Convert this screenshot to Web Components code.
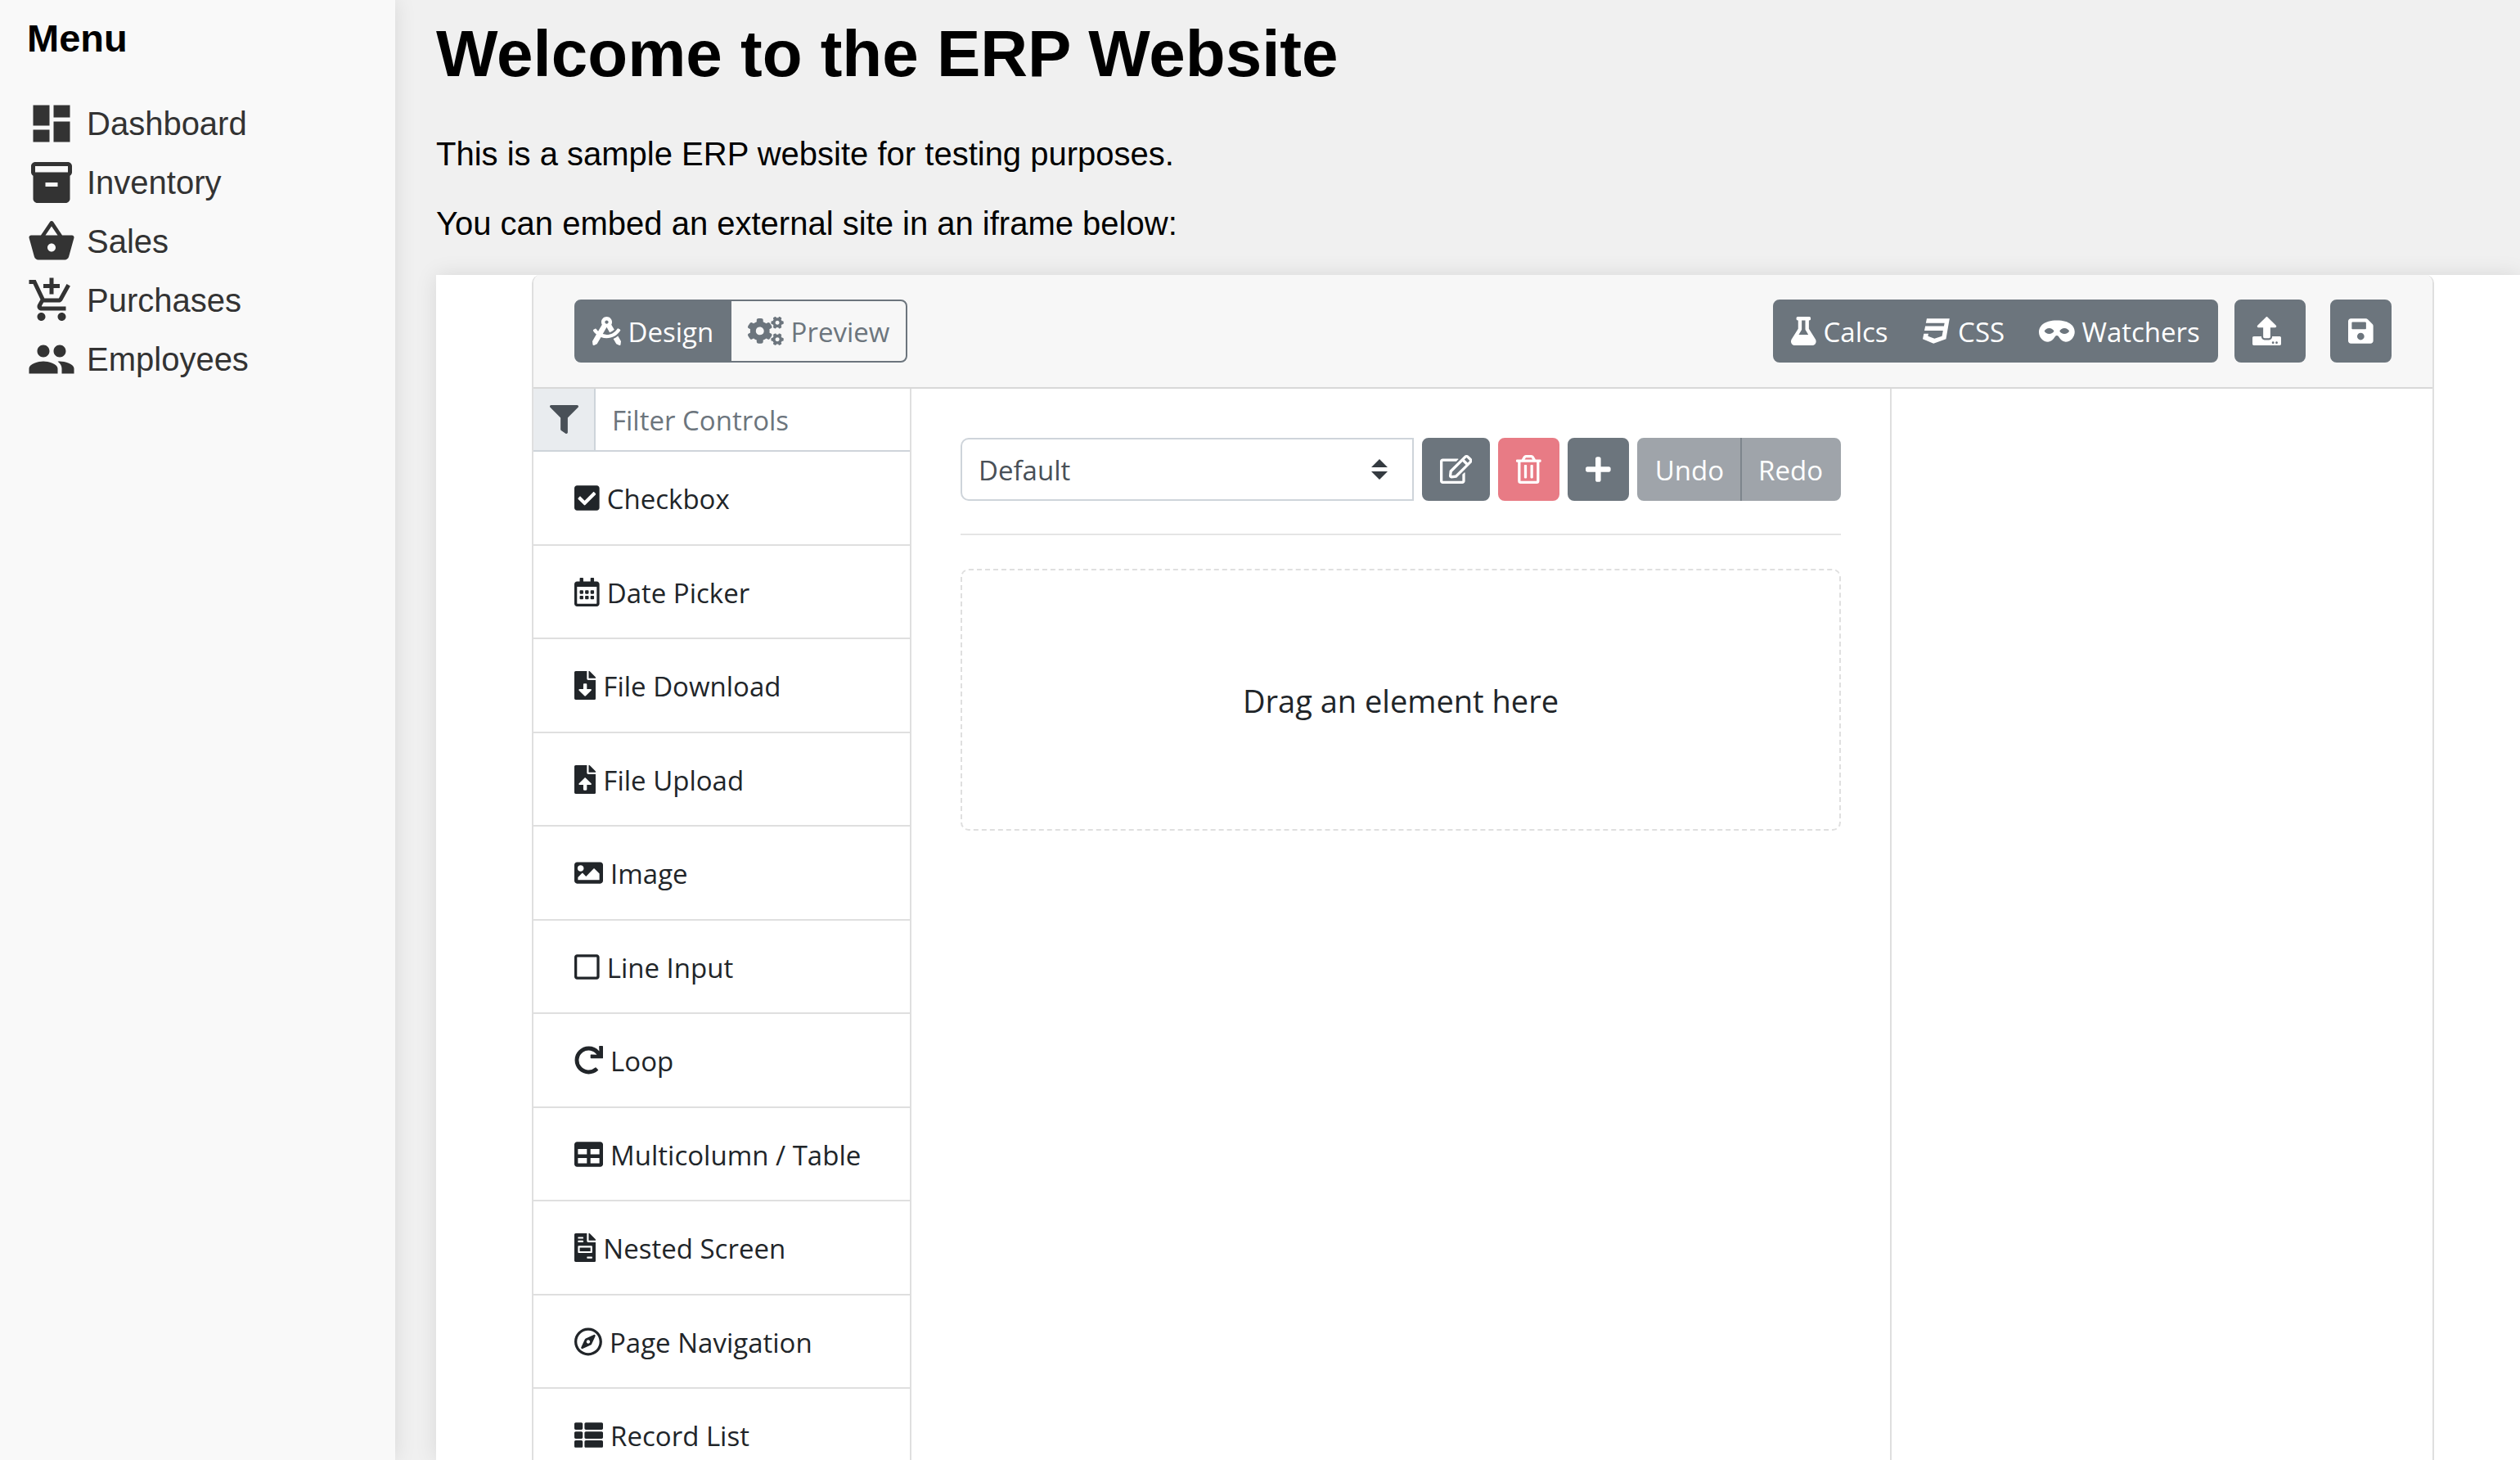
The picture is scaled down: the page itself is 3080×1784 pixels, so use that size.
<!DOCTYPE html>
<html lang="en">
<head>
<meta charset="utf-8">
<title>ERP Website</title>
<style>
  html, body { height: 100%; margin: 0; }
  body { font-family: "Liberation Sans", Arial, sans-serif; font-size: 40px; background: #f0f0f0; color: #000; overflow: hidden; }
</style>
</head>
<body>
<erp-app>
  <erp-sidebar slot="sidebar" heading="Menu">
    <erp-nav-item icon="dashboard">Dashboard</erp-nav-item>
    <erp-nav-item icon="inventory">Inventory</erp-nav-item>
    <erp-nav-item icon="basket">Sales</erp-nav-item>
    <erp-nav-item icon="cart">Purchases</erp-nav-item>
    <erp-nav-item icon="people">Employees</erp-nav-item>
  </erp-sidebar>
  <erp-intro>
    <span slot="title">Welcome to the ERP Website</span>
    <span slot="lead">This is a sample ERP website for testing purposes.</span>
    <span slot="note">You can embed an external site in an iframe below:</span>
  </erp-intro>
  <screen-builder>
    <builder-toolbar slot="toolbar"></builder-toolbar>
    <control-palette slot="controls">
      <palette-item icon="check">Checkbox</palette-item>
      <palette-item icon="calendar">Date Picker</palette-item>
      <palette-item icon="download">File Download</palette-item>
      <palette-item icon="fileup">File Upload</palette-item>
      <palette-item icon="image">Image</palette-item>
      <palette-item icon="square">Line Input</palette-item>
      <palette-item icon="redo">Loop</palette-item>
      <palette-item icon="table">Multicolumn / Table</palette-item>
      <palette-item icon="invoice">Nested Screen</palette-item>
      <palette-item icon="compass">Page Navigation</palette-item>
      <palette-item icon="list">Record List</palette-item>
    </control-palette>
    <builder-canvas slot="canvas">Drag an element here</builder-canvas>
  </screen-builder>
</erp-app>

<script>
// name: [viewBox width, viewBox height, path]
const ICONS = {
  dashboard: [24, 24, "M3 13h8V3H3v10zm0 8h8v-6H3v6zm10 0h8V11h-8v10zm0-18v6h8V3h-8z"],
  inventory: [24, 24, "M20 2H4c-1 0-2 .9-2 2v3.01c0 .72.43 1.34 1 1.69V20c0 1.1 1.1 2 2 2h14c.9 0 2-.9 2-2V8.7c.57-.35 1-.97 1-1.69V4c0-1.1-1-2-2-2zm-5 12H9v-2h6v2zm5-7H4V4l16-.02V7z"],
  basket: [24, 24, "M17.21 9l-4.38-6.56c-.19-.28-.51-.42-.83-.42-.32 0-.64.14-.83.43L6.79 9H2c-.55 0-1 .45-1 1 0 .09.01.18.04.27l2.54 9.27c.23.84 1 1.46 1.92 1.46h13c.92 0 1.69-.62 1.93-1.46l2.54-9.27L23 10c0-.55-.45-1-1-1h-4.79zM9 9l3-4.4L15 9H9zm3 8c-1.1 0-2-.9-2-2s.9-2 2-2 2 .9 2 2-.9 2-2 2z"],
  cart: [24, 24, "M11 9h2V6h3V4h-3V1h-2v3H8v2h3v3zm-4 9c-1.1 0-1.99.9-1.99 2S5.9 22 7 22s2-.9 2-2-.9-2-2-2zm10 0c-1.1 0-1.99.9-1.99 2s.89 2 1.99 2 2-.9 2-2-.9-2-2-2zm-9.83-3.25l.03-.12.9-1.63h7.45c.75 0 1.41-.41 1.75-1.03l3.86-7.01L19.42 4h-.01l-1.1 2-2.76 5H8.53l-.13-.27L6.16 6l-.95-2-.94-2H1v2h2l3.6 7.59-1.35 2.45c-.16.28-.25.61-.25.96 0 1.1.9 2 2 2h12v-2H7.42c-.13 0-.25-.11-.25-.25z"],
  people: [24, 24, "M16 11c1.66 0 2.99-1.34 2.99-3S17.66 5 16 5c-1.66 0-3 1.34-3 3s1.34 3 3 3zm-8 0c1.66 0 2.99-1.34 2.99-3S9.66 5 8 5C6.34 5 5 6.34 5 8s1.34 3 3 3zm0 2c-2.33 0-7 1.17-7 3.5V19h14v-2.5c0-2.33-4.67-3.5-7-3.5zm8 0c-.29 0-.62.02-.97.05 1.16.84 1.97 1.97 1.97 3.45V19h6v-2.5c0-2.33-4.67-3.5-7-3.5z"],
  drafting: [512, 512, "M457.01 344.42c-25.05 20.33-52.63 37.18-82.54 49.05l54.38 94.19 53.95 23.04c9.81 4.19 20.89-2.21 22.17-12.8l7.02-58.25-54.98-95.23zm42.49-94.56c4.86-7.67 1.89-17.99-6.05-22.39l-28.07-15.57c-7.48-4.15-16.61-1.46-21.26 5.72C403.01 281.15 332.25 320 256 320c-23.93 0-47.23-4.25-69.41-11.53l67.36-116.68c.7.02 1.34.21 2.04.21s1.35-.19 2.04-.21l51.09 88.5c31.23-8.96 59.56-25.75 82.61-48.92l-51.79-89.71C347.39 128.03 352 112.63 352 96c0-53.02-42.98-96-96-96s-96 42.98-96 96c0 16.63 4.61 32.03 12.05 45.66l-68.3 118.31c-12.55-11.61-23.96-24.59-33.68-39-4.79-7.1-13.97-9.62-21.38-5.33l-27.75 16.07c-7.85 4.54-10.63 14.9-5.64 22.47 15.57 23.64 34.69 44.21 55.98 62.02L0 439.66l7.02 58.25c1.28 10.59 12.36 16.99 22.17 12.8l53.95-23.04 70.8-122.63C186.13 377.28 220.62 384 256 384c99.05 0 190.88-51.01 243.5-134.14zM256 64c17.67 0 32 14.33 32 32s-14.33 32-32 32-32-14.33-32-32 14.33-32 32-32z"],
  cogs: [640, 512, "M512.1 191l-8.2 14.3c-3 5.3-9.4 7.5-15.1 5.4-11.8-4.4-22.6-10.7-32.1-18.6-4.6-3.8-5.8-10.5-2.8-15.7l8.2-14.3c-6.9-8-12.3-17.3-15.9-27.4h-16.5c-6 0-11.2-4.3-12.2-10.3-2-12-2.1-24.6 0-37.1 1-6 6.2-10.4 12.2-10.4h16.5c3.6-10.1 9-19.4 15.9-27.4l-8.2-14.3c-3-5.2-1.9-11.9 2.8-15.7 9.5-7.9 20.4-14.2 32.1-18.6 5.7-2.1 12.1.1 15.1 5.4l8.2 14.3c10.5-1.9 21.2-1.9 31.7 0L552 6.3c3-5.3 9.4-7.5 15.1-5.4 11.8 4.4 22.6 10.7 32.1 18.6 4.6 3.8 5.8 10.5 2.8 15.7l-8.2 14.3c6.9 8 12.3 17.3 15.9 27.4h16.5c6 0 11.2 4.3 12.2 10.3 2 12 2.1 24.6 0 37.1-1 6-6.2 10.4-12.2 10.4h-16.5c-3.6 10.1-9 19.4-15.9 27.4l8.2 14.3c3 5.2 1.9 11.9-2.8 15.7-9.5 7.9-20.4 14.2-32.1 18.6-5.7 2.1-12.1-.1-15.1-5.4l-8.2-14.3c-10.4 1.9-21.2 1.9-31.7 0zm-10.5-58.8c38.5 29.6 82.4-14.3 52.8-52.8-38.5-29.7-82.4 14.3-52.8 52.8zM386.3 286.1l33.7 16.8c10.1 5.8 14.5 18.1 10.5 29.1-8.9 24.2-26.4 46.4-42.6 65.8-7.4 8.9-20.2 11.1-30.3 5.3l-29.1-16.8c-16 13.7-34.6 24.6-54.9 31.7v33.6c0 11.6-8.3 21.6-19.7 23.6-24.6 4.2-50.4 4.4-75.9 0-11.5-2-20-11.9-20-23.6V418c-20.3-7.2-38.9-18-54.9-31.7L74 403c-10 5.8-22.9 3.6-30.3-5.3-16.2-19.4-33.3-41.6-42.2-65.7-4-10.9.4-23.2 10.5-29.1l33.3-16.8c-3.9-20.9-3.9-42.4 0-63.4L12 205.8c-10.1-5.8-14.6-18.1-10.5-29 8.9-24.2 26-46.4 42.2-65.8 7.4-8.9 20.2-11.1 30.3-5.3l29.1 16.8c16-13.7 34.6-24.6 54.9-31.7V57.1c0-11.5 8.2-21.5 19.6-23.5 24.6-4.2 50.5-4.4 76-.1 11.5 2 20 11.9 20 23.6v33.6c20.3 7.2 38.9 18 54.9 31.7l29.1-16.8c10-5.8 22.9-3.6 30.3 5.3 16.2 19.4 33.2 41.6 42.1 65.8 4 10.9.1 23.2-10 29.1l-33.7 16.8c3.9 21 3.9 42.5 0 63.5zm-117.6 21.1c59.2-77-28.7-164.9-105.7-105.7-59.2 77 28.7 164.9 105.7 105.7zm243.4 182.7l-8.2 14.3c-3 5.3-9.4 7.5-15.1 5.4-11.8-4.4-22.6-10.7-32.1-18.6-4.6-3.8-5.8-10.5-2.8-15.7l8.2-14.3c-6.9-8-12.3-17.3-15.9-27.4h-16.5c-6 0-11.2-4.3-12.2-10.3-2-12-2.1-24.6 0-37.1 1-6 6.2-10.4 12.2-10.4h16.5c3.6-10.1 9-19.4 15.9-27.4l-8.2-14.3c-3-5.2-1.9-11.9 2.8-15.7 9.5-7.9 20.4-14.2 32.1-18.6 5.7-2.1 12.1.1 15.1 5.4l8.2 14.3c10.5-1.9 21.2-1.9 31.7 0l8.2-14.3c3-5.3 9.4-7.5 15.1-5.4 11.8 4.4 22.6 10.7 32.1 18.6 4.6 3.8 5.8 10.5 2.8 15.7l-8.2 14.3c6.9 8 12.3 17.3 15.9 27.4h16.5c6 0 11.2 4.3 12.2 10.3 2 12 2.1 24.6 0 37.1-1 6-6.2 10.4-12.2 10.4h-16.5c-3.6 10.1-9 19.4-15.9 27.4l8.2 14.3c3 5.2 1.9 11.9-2.8 15.7-9.5 7.9-20.4 14.2-32.1 18.6-5.7 2.1-12.1-.1-15.1-5.4l-8.2-14.3c-10.4 1.9-21.2 1.9-31.7 0zM501.6 431c38.5 29.6 82.4-14.3 52.8-52.8-38.5-29.6-82.4 14.3-52.8 52.8z"],
  flask: [448, 512, "M437.2 403.5L320 215V64h8c13.3 0 24-10.7 24-24V24c0-13.3-10.7-24-24-24H120c-13.3 0-24 10.7-24 24v16c0 13.3 10.7 24 24 24h8v151L10.8 403.5C-18.5 450.6 15.3 512 70.9 512h306.2c55.7 0 89.4-61.5 60.1-108.5zM137.9 320l48.2-77.6c3.7-5.2 5.8-11.6 5.8-18.4V64h64v160c0 6.9 2.2 13.2 5.8 18.4l48.2 77.6h-172z"],
  css: [512, 512, "M480 32l-64 368-223.3 80L0 400l19.6-94.8h82l-8 40.6L210 390.2l134.1-44.4 18.8-97.1H29.5l16-82h333.7l10.5-52.7H56.3l16.3-82H480z"],
  mask: [640, 512, "M320.67 64c-442.6 0-357.57 384-158.46 384 39.9 0 77.47-20.69 101.42-55.86l25.73-37.79c15.66-22.99 46.97-22.99 62.63 0l25.73 37.79C401.66 427.31 439.23 448 479.13 448c189.86 0 290.63-384-158.46-384zM184 308.36c-41.06 0-67.76-25.66-80.08-41.05-5.23-6.53-5.23-16.09 0-22.63 12.32-15.4 39.01-41.05 80.08-41.05s67.76 25.66 80.08 41.05c5.23 6.53 5.23 16.09 0 22.63-12.32 15.4-39.02 41.05-80.08 41.05zm272 0c-41.06 0-67.76-25.66-80.08-41.05-5.23-6.53-5.23-16.09 0-22.63 12.32-15.4 39.01-41.05 80.08-41.05s67.76 25.66 80.08 41.05c5.23 6.53 5.23 16.09 0 22.63-12.32 15.4-39.02 41.05-80.08 41.05z"],
  upload: [512, 512, "M296 384h-80c-13.3 0-24-10.7-24-24V192h-87.7c-17.8 0-26.7-21.5-14.1-34.1L242.3 5.7c7.5-7.5 19.8-7.5 27.3 0l152.2 152.2c12.6 12.6 3.7 34.1-14.1 34.1H320v168c0 13.3-10.7 24-24 24zm216-8v112c0 13.3-10.7 24-24 24H24c-13.3 0-24-10.7-24-24V376c0-13.3 10.7-24 24-24h136v8c0 30.9 25.1 56 56 56h80c30.9 0 56-25.1 56-56v-8h136c13.3 0 24 10.7 24 24zm-124 88c0-11-9-20-20-20s-20 9-20 20 9 20 20 20 20-9 20-20zm64 0c0-11-9-20-20-20s-20 9-20 20 9 20 20 20 20-9 20-20z"],
  save: [448, 512, "M433.941 129.941l-83.882-83.882A48 48 0 0 0 316.118 32H48C21.49 32 0 53.49 0 80v352c0 26.51 21.49 48 48 48h352c26.51 0 48-21.49 48-48V163.882a48 48 0 0 0-14.059-33.941zM224 416c-35.346 0-64-28.654-64-64 0-35.346 28.654-64 64-64s64 28.654 64 64c0 35.346-28.654 64-64 64zm96-304.52V212c0 6.627-5.373 12-12 12H76c-6.627 0-12-5.373-12-12V108c0-6.627 5.373-12 12-12h228.52c3.183 0 6.235 1.264 8.485 3.515l3.48 3.48A11.996 11.996 0 0 1 320 111.48z"],
  filter: [512, 512, "M487.976 0H24.028C2.71 0-8.047 25.866 7.058 40.971L192 225.941V432c0 7.831 3.821 15.17 10.237 19.662l80 55.98C298.02 518.69 320 507.493 320 487.98V225.941l184.947-184.97C520.021 25.896 509.338 0 487.976 0z"],
  check: [448, 512, "M400 480H48c-26.51 0-48-21.49-48-48V80c0-26.51 21.49-48 48-48h352c26.51 0 48 21.49 48 48v352c0 26.51-21.49 48-48 48zm-204.686-98.059l184-184c6.248-6.248 6.248-16.379 0-22.627l-22.627-22.627c-6.248-6.248-16.379-6.249-22.628 0L184 302.745l-70.059-70.059c-6.248-6.248-16.379-6.248-22.628 0l-22.627 22.627c-6.248 6.248-6.248 16.379 0 22.627l104 104c6.249 6.25 16.379 6.25 22.628.001z"],
  calendar: [448, 512, "M148 288h-40c-6.6 0-12-5.4-12-12v-40c0-6.6 5.4-12 12-12h40c6.6 0 12 5.4 12 12v40c0 6.6-5.4 12-12 12zm108-12v-40c0-6.6-5.4-12-12-12h-40c-6.6 0-12 5.4-12 12v40c0 6.6 5.4 12 12 12h40c6.6 0 12-5.4 12-12zm96 0v-40c0-6.6-5.4-12-12-12h-40c-6.6 0-12 5.4-12 12v40c0 6.6 5.4 12 12 12h40c6.6 0 12-5.4 12-12zm-96 96v-40c0-6.6-5.4-12-12-12h-40c-6.6 0-12 5.4-12 12v40c0 6.6 5.4 12 12 12h40c6.6 0 12-5.4 12-12zm-96 0v-40c0-6.6-5.4-12-12-12h-40c-6.6 0-12 5.4-12 12v40c0 6.6 5.4 12 12 12h40c6.6 0 12-5.4 12-12zm192 0v-40c0-6.6-5.4-12-12-12h-40c-6.6 0-12 5.4-12 12v40c0 6.6 5.4 12 12 12h40c6.6 0 12-5.4 12-12zm96-260v352c0 26.5-21.5 48-48 48H48c-26.5 0-48-21.5-48-48V112c0-26.5 21.5-48 48-48h48V12c0-6.6 5.4-12 12-12h40c6.6 0 12 5.4 12 12v52h128V12c0-6.6 5.4-12 12-12h40c6.6 0 12 5.4 12 12v52h48c26.5 0 48 21.5 48 48zm-48 346V160H48v298c0 3.3 2.7 6 6 6h340c3.3 0 6-2.7 6-6z"],
  download: [384, 512, "M224 136V0H24C10.7 0 0 10.7 0 24v464c0 13.3 10.7 24 24 24h336c13.3 0 24-10.7 24-24V160H248c-13.2 0-24-10.8-24-24zm76.45 211.36l-96.42 95.7c-6.65 6.61-17.39 6.61-24.04 0l-96.42-95.7C73.42 337.29 80.54 320 94.82 320H160v-80c0-8.84 7.16-16 16-16h32c8.84 0 16 7.16 16 16v80h65.18c14.28 0 21.4 17.29 11.27 27.36zM377 105L279.1 7c-4.5-4.5-10.6-7-17-7H256v128h128v-6.1c0-6.3-2.5-12.4-7-16.9z"],
  fileup: [384, 512, "M224 136V0H24C10.7 0 0 10.7 0 24v464c0 13.3 10.7 24 24 24h336c13.3 0 24-10.7 24-24V160H248c-13.2 0-24-10.8-24-24zm65.18 216.01H224v80c0 8.84-7.16 16-16 16h-32c-8.84 0-16-7.16-16-16v-80H94.82c-14.28 0-21.41-17.29-11.27-27.36l96.42-95.7c6.65-6.61 17.39-6.61 24.04 0l96.42 95.7c10.15 10.07 3.03 27.36-11.25 27.36zM377 105L279.1 7c-4.5-4.5-10.6-7-17-7H256v128h128v-6.1c0-6.3-2.5-12.4-7-16.9z"],
  image: [512, 512, "M464 448H48c-26.51 0-48-21.49-48-48V112c0-26.51 21.49-48 48-48h416c26.51 0 48 21.49 48 48v288c0 26.51-21.49 48-48 48zM112 120c-30.928 0-56 25.072-56 56s25.072 56 56 56 56-25.072 56-56-25.072-56-56-56zM64 384h384V272l-87.515-87.515c-4.686-4.686-12.284-4.686-16.971 0L208 320l-55.515-55.515c-4.686-4.686-12.284-4.686-16.971 0L64 336v48z"],
  square: [448, 512, "M400 32H48C21.5 32 0 53.5 0 80v352c0 26.5 21.5 48 48 48h352c26.5 0 48-21.5 48-48V80c0-26.5-21.5-48-48-48zm-6 400H54c-3.3 0-6-2.7-6-6V86c0-3.3 2.7-6 6-6h340c3.3 0 6 2.7 6 6v340c0 3.3-2.7 6-6 6z"],
  redo: [512, 512, "M500.33 0h-47.41a12 12 0 0 0-12 12.57l4 82.76A247.42 247.42 0 0 0 256 8C119.34 8 7.9 119.53 8 256.19 8.1 393.07 119.1 504 256 504a247.1 247.1 0 0 0 166.18-63.91 12 12 0 0 0 .48-17.43l-34-34a12 12 0 0 0-16.38-.55A176 176 0 1 1 402.1 157.8l-101.53-4.87a12 12 0 0 0-12.57 12v47.41a12 12 0 0 0 12 12h200.33a12 12 0 0 0 12-12V12a12 12 0 0 0-12-12z"],
  table: [512, 512, "M464 32H48C21.49 32 0 53.49 0 80v352c0 26.51 21.49 48 48 48h416c26.51 0 48-21.49 48-48V80c0-26.51-21.49-48-48-48zM224 416H64v-96h160v96zm0-160H64v-96h160v96zm224 160H288v-96h160v96zm0-160H288v-96h160v96z"],
  invoice: [384, 512, "M288 256H96v64h192v-64zm89-151L279.1 7c-4.5-4.5-10.6-7-17-7H256v128h128v-6.1c0-6.3-2.5-12.4-7-16.9zm-153 31V0H24C10.7 0 0 10.7 0 24v464c0 13.3 10.7 24 24 24h336c13.3 0 24-10.7 24-24V160H248c-13.2 0-24-10.8-24-24zM64 72c0-4.42 3.58-8 8-8h80c4.42 0 8 3.58 8 8v16c0 4.42-3.58 8-8 8H72c-4.42 0-8-3.58-8-8V72zm0 64c0-4.42 3.58-8 8-8h80c4.42 0 8 3.58 8 8v16c0 4.42-3.58 8-8 8H72c-4.42 0-8-3.58-8-8v-16zm256 304c0 4.42-3.58 8-8 8h-80c-4.42 0-8-3.58-8-8v-16c0-4.42 3.58-8 8-8h80c4.42 0 8 3.58 8 8v16zm0-200v96c0 8.84-7.16 16-16 16H80c-8.84 0-16-7.16-16-16v-96c0-8.84 7.16-16 16-16h224c8.84 0 16 7.16 16 16z"],
  compass: [496, 512, "M347.94 129.86L203.6 195.83a31.938 31.938 0 0 0-15.77 15.77l-65.97 144.34c-7.61 16.65 9.54 33.81 26.2 26.2l144.34-65.97a31.938 31.938 0 0 0 15.77-15.77l65.97-144.34c7.61-16.66-9.54-33.81-26.2-26.2zm-77.36 148.72c-12.47 12.47-32.69 12.47-45.16 0-12.47-12.47-12.47-32.69 0-45.16 12.47-12.47 32.69-12.47 45.16 0 12.47 12.47 12.47 32.69 0 45.16zM248 8C111.03 8 0 119.03 0 256s111.03 248 248 248 248-111.03 248-248S384.97 8 248 8zm0 448c-110.28 0-200-89.72-200-200S137.72 56 248 56s200 89.72 200 200-89.72 200-200 200z"],
  list: [512, 512, "M149.333 216v80c0 13.255-10.745 24-24 24H24c-13.255 0-24-10.745-24-24v-80c0-13.255 10.745-24 24-24h101.333c13.255 0 24 10.745 24 24zM0 376v80c0 13.255 10.745 24 24 24h101.333c13.255 0 24-10.745 24-24v-80c0-13.255-10.745-24-24-24H24c-13.255 0-24 10.745-24 24zM125.333 32H24C10.745 32 0 42.745 0 56v80c0 13.255 10.745 24 24 24h101.333c13.255 0 24-10.745 24-24V56c0-13.255-10.745-24-24-24zm80 448H488c13.255 0 24-10.745 24-24v-80c0-13.255-10.745-24-24-24H205.333c-13.255 0-24 10.745-24 24v80c0 13.255 10.745 24 24 24zm-24-424v80c0 13.255 10.745 24 24 24H488c13.255 0 24-10.745 24-24V56c0-13.255-10.745-24-24-24H205.333c-13.255 0-24 10.745-24 24zm24 264H488c13.255 0 24-10.745 24-24v-80c0-13.255-10.745-24-24-24H205.333c-13.255 0-24 10.745-24 24v80c0 13.255 10.745 24 24 24z"],
  edit: [576, 512, "M402.3 344.9l32-32c5-5 13.7-1.5 13.7 5.7V464c0 26.5-21.5 48-48 48H48c-26.5 0-48-21.5-48-48V112c0-26.5 21.5-48 48-48h273.5c7.1 0 10.7 8.6 5.7 13.7l-32 32c-1.5 1.5-3.5 2.3-5.7 2.3H48v352h352V350.5c0-2.1.8-4.1 2.3-5.6zm156.6-201.8L296.3 405.7l-90.4 10c-26.2 2.9-48.5-19.2-45.6-45.6l10-90.4L432.9 17.1c22.9-22.9 59.9-22.9 82.7 0l43.2 43.2c22.9 22.9 22.9 60 .1 82.8zM460.1 174L402 115.9 216.2 301.8l-7.3 65.3 65.3-7.3L460.1 174zm64.8-79.7l-43.2-43.2c-4.1-4.1-10.8-4.1-14.8 0L436 82l58.1 58.1 30.9-30.9c4-4.2 4-10.8-.1-14.9z"],
  trash: [448, 512, "M268 416h24a12 12 0 0 0 12-12V188a12 12 0 0 0-12-12h-24a12 12 0 0 0-12 12v216a12 12 0 0 0 12 12zM432 80h-82.41l-34-56.7A48 48 0 0 0 274.41 0H173.59a48 48 0 0 0-41.16 23.3L98.41 80H16A16 16 0 0 0 0 96v16a16 16 0 0 0 16 16h16v336a48 48 0 0 0 48 48h288a48 48 0 0 0 48-48V128h16a16 16 0 0 0 16-16V96a16 16 0 0 0-16-16zM171.84 50.91A6 6 0 0 1 177 48h94a6 6 0 0 1 5.15 2.91L293.61 80H154.39zM368 464H80V128h288zm-212-48h24a12 12 0 0 0 12-12V188a12 12 0 0 0-12-12h-24a12 12 0 0 0-12 12v216a12 12 0 0 0 12 12z"],
  plus: [448, 512, "M416 208H272V64c0-17.67-14.33-32-32-32h-32c-17.67 0-32 14.33-32 32v144H32c-17.67 0-32 14.33-32 32v32c0 17.67 14.33 32 32 32h144v144c0 17.67 14.33 32 32 32h32c17.67 0 32-14.33 32-32V304h144c17.67 0 32-14.33 32-32v-32c0-17.67-14.33-32-32-32z"],
  caret: [4, 5, "M2 0L0 2h4zm0 5L0 3h4z"]
};

// Registers a custom element whose open shadow root is filled from render(host).
function define(tag, render) {
  customElements.define(tag, class extends HTMLElement {
    constructor() {
      super();
      this.attachShadow({ mode: "open" });
    }
    connectedCallback() {
      const t = document.createElement("template");
      t.innerHTML = render(this);
      this.shadowRoot.replaceChildren(t.content.cloneNode(true));
    }
  });
}

define("app-icon", el => {
  const [w, h, d] = ICONS[el.getAttribute("name")];
  return `<style>
    :host { display: inline-block; height: var(--icon-size, 35px); line-height: 0; vertical-align: -4px; flex: none; }
    svg { display: block; height: 100%; width: auto; fill: currentColor; }
  </style><svg viewBox="0 0 ${w} ${h}" aria-hidden="true"><path d="${d}"/></svg>`;
});

define("erp-app", () => `<style>
    :host { display: flex; height: 100%; overflow: hidden; }
    ::slotted([slot=sidebar]) { flex: none; }
    main { flex: 1; min-width: 0; display: flex; flex-direction: column; padding: 20px 0 0 50px; }
  </style>
  <slot name="sidebar"></slot><main><slot></slot></main>`);

define("erp-sidebar", el => `<style>
    :host { display: block; box-sizing: border-box; width: 483px; padding: 20px 33px; background: #f9f9f9; box-shadow: 0 0 25px rgba(0, 0, 0, .1); }
    h2 { margin: 0 0 47px; font-size: 47px; line-height: 54px; }
    nav { display: flex; flex-direction: column; gap: 12px; }
  </style>
  <h2>${el.getAttribute("heading")}</h2><nav><slot></slot></nav>`);

define("erp-nav-item", el => `<style>
    :host { display: block; --icon-size: 60px; }
    a { display: flex; align-items: center; gap: 13px; color: #333; text-decoration: none; line-height: 58px; }
  </style>
  <a href="#"><app-icon name="${el.getAttribute("icon")}"></app-icon><slot></slot></a>`);

define("erp-intro", () => `<style>
    :host { display: block; }
    h1 { margin: 0 0 54px; font-size: 80px; line-height: 92px; }
    p { margin: 0 0 40px; line-height: 45px; }
  </style>
  <h1><slot name="title"></slot></h1><p><slot name="lead"></slot></p><p><slot name="note"></slot></p>`);

define("screen-builder", () => `<style>
    :host { flex: 1; min-height: 0; display: flex; box-sizing: border-box; padding: 0 105px 0 117px; background: #fff; color: #212529;
      box-shadow: 0 0 25px rgba(0, 0, 0, .1); font-family: "Open Sans", "Noto Sans", sans-serif; font-size: 33px; }
    .card { flex: 1; min-width: 0; display: flex; flex-direction: column; border: solid #dfdfdf; border-width: 0 2px; border-radius: 10px 10px 0 0; overflow: hidden; }
    .columns { flex: 1; min-height: 0; display: grid; grid-template-columns: 462fr 1196fr 663fr; }
    .columns > * { min-width: 0; min-height: 0; overflow: hidden; }
    .controls { border-right: 2px solid #dfdfdf; }
    .inspector { border-left: 2px solid #dfdfdf; }
  </style>
  <div class="card"><slot name="toolbar"></slot>
    <div class="columns"><div class="controls"><slot name="controls"></slot></div>
      <div><slot name="canvas"></slot></div><aside class="inspector"></aside></div></div>`);

define("tool-button", el => {
  const icon = el.getAttribute("icon"), label = el.getAttribute("label");
  return `<style>
    :host { display: block; flex: none; }
    button { display: block; margin: 0; box-sizing: border-box; font: inherit; line-height: 53px; padding: 11px 20px 9px; white-space: pre;
      border: 2px solid #6c757d; border-radius: var(--corners, 8px); background: #6c757d; color: #fff; }
    button:disabled { opacity: .65; }
    :host([variant=outline]) button { background: transparent; color: #6c757d; }
    :host([variant=danger]) button { background: #dc3545; border-color: #dc3545; }
  </style><button type="button"${label ? ` aria-label="${label}"` : ""}${el.hasAttribute("disabled") ? " disabled" : ""}>${
    icon ? `<app-icon name="${icon}"></app-icon>` : ""}<slot></slot></button>`;
});

define("button-group", () => `<style>
    :host { display: flex; flex: none; }
    ::slotted(*) { --corners: 0; }
    ::slotted(:not(:first-child)) { margin-left: -2px; }
    ::slotted(:first-child) { --corners: 8px 0 0 8px; }
    ::slotted(:last-child) { --corners: 0 8px 8px 0; }
  </style><slot></slot>`);

define("builder-toolbar", () => `<style>
    :host { display: flex; flex: none; justify-content: space-between; padding: 30px 50px; background: #f7f7f7; border-bottom: 2px solid #d8d8d8; }
    .actions { display: flex; gap: 20px; }
    .last { margin-left: 10px; }
  </style>
  <button-group><tool-button icon="drafting"> Design</tool-button><tool-button icon="cogs" variant="outline"> Preview</tool-button></button-group>
  <div class="actions">
    <button-group><tool-button icon="flask"> Calcs</tool-button><tool-button icon="css"> CSS</tool-button><tool-button icon="mask"> Watchers</tool-button></button-group>
    <tool-button icon="upload" label="Import or export"> </tool-button>
    <tool-button class="last" icon="save" label="Save"></tool-button>
  </div>`);

define("control-palette", () => `<style>
    :host { display: block; }
    .filter { display: flex; border-bottom: 2px solid #ced4da; height: 75px; }
    label { display: flex; align-items: center; padding: 0 19px 0 20px; background: #e9ecef; color: #495057; border-right: 2px solid #ced4da; }
    input { flex: 1; min-width: 0; border: 0; outline: 0; padding: 2px 20px 0; font: inherit; color: #495057; background: #fff; }
    input::placeholder { color: #6c757d; opacity: 1; }
  </style>
  <div class="filter"><label for="filter" aria-label="Filter Controls"><app-icon name="filter"></app-icon></label>
    <input id="filter" type="text" placeholder="Filter Controls"></div>
  <div role="list"><slot></slot></div>`);

define("palette-item", el => `<style>
    :host { display: block; padding: 31px 50px 29px; border-bottom: 2px solid #dfdfdf; font-size: 35px; line-height: 1.5; }
    span { font-size: 33px; line-height: 1; }
  </style><app-icon name="${el.getAttribute("icon")}"></app-icon> <span><slot></slot></span>`);

define("builder-canvas", () => `<style>
    :host { display: block; padding: 60px; }
    .bar { display: flex; gap: 10px; }
    .select { flex: 1; min-width: 0; display: grid; align-items: center; }
    .select > * { grid-area: 1 / 1; }
    select { appearance: none; width: 100%; height: 77px; margin: 0; padding: 2px 20px 0; font: inherit; color: #495057; background: #fff;
      border: 2px solid #ced4da; border-radius: 10px 0 0 10px; }
    app-icon { --icon-size: 25px; justify-self: end; margin-right: 32px; color: #343a40; pointer-events: none; }
    hr { margin: 40px 0 41px; border: 0; border-top: 2px solid #e5e5e5; }
    .drop { padding: 129px 20px 127px; border: 2px dashed #dfdfdf; border-radius: 10px; text-align: center; font-size: 38px; line-height: 60px; }
  </style>
  <div class="bar">
    <div class="select"><select aria-label="Screen"><option>Default</option></select><app-icon name="caret"></app-icon></div>
    <tool-button icon="edit" label="Edit"></tool-button>
    <tool-button icon="trash" label="Delete" variant="danger" disabled></tool-button>
    <tool-button icon="plus" label="Add"></tool-button>
    <button-group><tool-button disabled>Undo</tool-button><tool-button disabled>Redo</tool-button></button-group>
  </div>
  <hr>
  <div class="drop"><slot></slot></div>`);
</script>
</body>
</html>
